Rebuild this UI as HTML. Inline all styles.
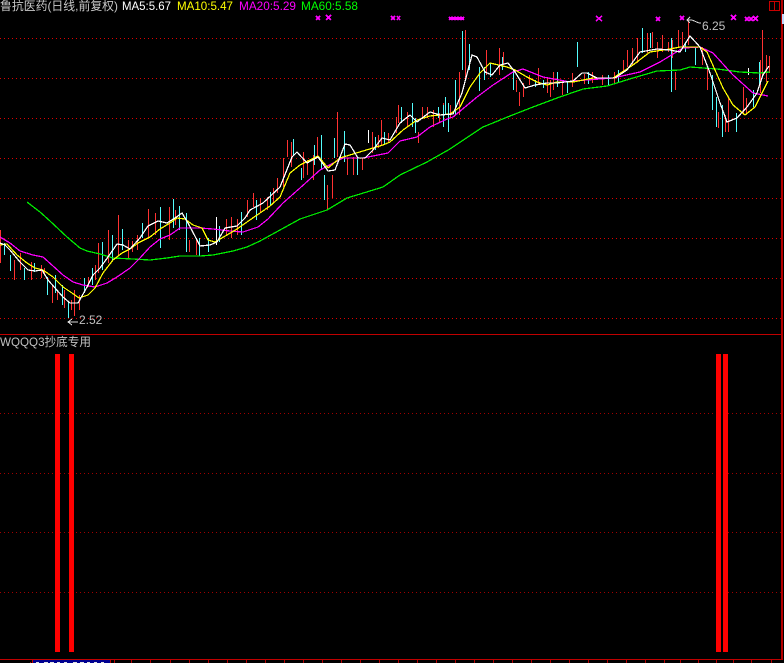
<!DOCTYPE html>
<html><head><meta charset="utf-8"><title>K</title>
<style>
html,body{margin:0;padding:0;background:#000;width:784px;height:663px;overflow:hidden}
svg{display:block}
text{font-family:"Liberation Sans","WenQuanYi Zen Hei","Noto Sans CJK SC",sans-serif;font-size:12px}
polyline{stroke-width:1.25}
</style></head><body>
<svg width="784" height="663" viewBox="0 0 784 663" xmlns="http://www.w3.org/2000/svg">
<rect width="784" height="663" fill="#000"/>
<g shape-rendering="crispEdges" fill="none">
<path d="M0 38.5H781M0 78.5H781M0 118.5H781M0 158.5H781M0 198.5H781M0 238.5H781M0 278.5H781M0 318.5H781" stroke="#e00000" stroke-dasharray="1 3"/>
<path d="M0 413.5H781M0 473.5H781M0 532.5H781M0 592.5H781" stroke="#a00000" stroke-dasharray="1 3"/>
<path d="M0 334.5H783M0 659.5H783" stroke="#c00000"/>
<path d="M782 0V660" stroke="#b40000" stroke-width="2"/>
<path d="M769.5 1.5H779.5V10.5H769.5ZM774.5 1.5V10.5" stroke="#c80000"/>
<rect x="782" y="14" width="2" height="10" fill="#c0d8ff"/>
<path d="M114.5 660V663M131.5 660V663M150.5 660V663M170.5 660V663M189.5 660V663M208.5 660V663M227.5 660V663M246.5 660V663M265.5 660V663M284.5 660V663M303.5 660V663M322.5 660V663M341.5 660V663M360.5 660V663M379.5 660V663M398.5 660V663M417.5 660V663M436.5 660V663M455.5 660V663M474.5 660V663M493.5 660V663M512.5 660V663M531.5 660V663M550.5 660V663M569.5 660V663M588.5 660V663M607.5 660V663M626.5 660V663M645.5 660V663M664.5 660V663M680.5 660V663M698.5 660V663M716.5 660V663M733.5 660V663M751.5 660V663M771.5 660V663" stroke="#b40000"/>
<rect x="33" y="660" width="77" height="3" fill="#000090"/>
<path d="M32.5 660V663M110.5 660V663M30.5 662V663" stroke="#c00000"/>
<path d="M36 662.5h3M44 662.5h4M50 662.5h4M57 662.5h3M64 662.5h3M73 662.5h4M80 662.5h4M87 662.5h3M94 662.5h3M101 662.5h3" stroke="#e0e0e0"/>
<rect x="55" y="354" width="5" height="298" fill="#ff0000"/>
<rect x="69" y="354" width="5" height="298" fill="#ff0000"/>
<rect x="716" y="354" width="5" height="298" fill="#ff0000"/>
<rect x="723" y="354" width="5" height="298" fill="#ff0000"/>

<path stroke="#ff3232" d="M0.5 230V263M14.5 260V280M20.5 253V270M31.5 262V280M41.5 265V278M44.5 268V275M52.5 285V303M57.5 290V300M64.5 290V308M71.5 300V310M74.5 290V316M79.5 295V310M88.5 277V287M95.5 265V280M98.5 243V273M108.5 230V263M118.5 215V255M128.5 240V258M132.5 241V252M137.5 235V250M148.5 209V238M155.5 213V235M169.5 207V240M175.5 210V225M189.5 240V252M196.5 240V255M226.5 219V235M231.5 217V238M237.5 219V235M247.5 200V217M253.5 193V207M260.5 198V212M267.5 197V210M273.5 188V203M277.5 178V193M283.5 158V187M287.5 140V157M291.5 142V167M303.5 152V178M307.5 160V175M313.5 155V180M317.5 137V157M327.5 185V210M332.5 175V198M337.5 112V157M347.5 158V175M353.5 157V175M362.5 158V170M372.5 132V153M378.5 135V148M381.5 120V145M388.5 133V142M396.5 117V133M398.5 105V123M407.5 112V127M418.5 132V143M422.5 107V118M427.5 107V118M433.5 110V127M439.5 113V123M443.5 103V117M450.5 105V118M459.5 72V115M465.5 30V78M486.5 50V75M499.5 48V75M503.5 52V65M516.5 80V92M519.5 92V106M523.5 83V97M529.5 75V85M538.5 68V85M547.5 77V93M550.5 80V97M553.5 72V90M562.5 83V95M572.5 73V87M584.5 74V84M592.5 72V83M602.5 75V85M614.5 72V84M623.5 60V73M627.5 50V67M632.5 48V65M637.5 38V63M647.5 33V53M652.5 32V48M657.5 42V58M662.5 35V52M668.5 42V52M672.5 40V58M675.5 72V90M678.5 30V47M682.5 32V48M688.5 20V45M702.5 47V65M707.5 67V90M718.5 112V128M725.5 115V132M728.5 98V132M743.5 87V113M746.5 98V113M760.5 60V93M762.5 30V77M766.5 55V82M769.5 56V73"/>
<path stroke="#54fcfc" d="M4.5 243V255M10.5 255V271M24.5 268V280M34.5 263V272M47.5 277V295M55.5 275V293M62.5 285V305M68.5 302V318M84.5 278V293M92.5 268V285M102.5 242V270M112.5 235V260M122.5 229V250M142.5 223V238M160.5 207V248M173.5 199V228M179.5 206V230M186.5 213V252M199.5 238V256M208.5 238V252M219.5 226V242M241.5 212V235M256.5 200V220M270.5 192V205M293.5 139V155M301.5 168V180M314.5 145V165M321.5 135V170M324.5 175V200M334.5 138V158M344.5 131V162M357.5 158V175M375.5 137V150M384.5 132V145M401.5 107V123M412.5 103V127M415.5 118V133M438.5 107V118M443.5 105V127M448.5 103V132M445.5 97V115M455.5 80V115M462.5 31V70M469.5 44V70M479.5 67V91M484.5 67V80M490.5 63V77M502.5 57V70M513.5 70V90M535.5 80V87M543.5 80V88M557.5 72V87M567.5 82V93M577.5 42V67M588.5 72V84M608.5 75V85M618.5 70V82M642.5 28V53M650.5 33V48M671.5 38V92M685.5 42V52M695.5 48V65M712.5 75V110M716.5 97V127M722.5 105V137M736.5 113V132M753.5 90V107M759.5 62V85"/>
<path stroke="#ffffff" d="M216.5 217V245M368.5 130V143M748.5 68V75"/>

<polyline stroke="#00f000" points="27,202 40,212 50,221 67,237 80,248 87,251 100,254 113,258 133,259 150,260 167,258 180,256 200,256 213,255 233,251 247,247 260,241 280,230 300,219 327,210 347,198 383,187 400,175 427,162 450,149 465,139 483,127 510,116 533,107 557,98 583,89 607,86 633,78 657,71 680,70 690,67 717,69 740,72 760,73 770,72"/>
<polyline stroke="#ff00ff" points="0,237 10,243 20,251 33,255 43,257 53,266 63,275 73,282 83,285 95,287 107,283 117,277 130,268 140,258 150,247 160,239 170,235 180,228 200,228 213,229 230,231 243,232 258,227 268,219 283,203 300,188 320,170 343,158 363,158 388,153 400,141 417,137 430,127 447,119 453,117 477,97 493,85 513,72 523,69 543,77 570,82 573,81 613,78 640,72 660,62 683,48 700,47 713,53 733,75 753,93 768,96"/>
<polyline stroke="#ffff00" points="0,245 7,244 17,255 27,263 35,268 43,270 53,277 63,287 72,293 79,298 88,295 95,288 103,273 113,260 122,253 130,249 138,243 150,237 160,229 170,223 177,218 185,219 193,225 202,228 208,240 215,242 227,235 237,229 247,222 260,213 270,206 280,197 290,173 300,165 318,156 328,168 340,158 363,151 383,145 390,142 403,130 417,120 430,116 450,114 460,107 470,87 480,73 490,63 507,67 515,70 527,77 537,82 547,85 557,82 570,82 573,82 593,78 613,78 633,65 650,52 670,49 680,47 700,47 707,52 723,88 733,105 745,115 755,107 768,81"/>
<polyline stroke="#ffffff" points="0,243 5,245 10,250 20,262 28,270 35,271 42,270 48,280 55,288 63,297 70,303 78,303 87,287 93,275 100,268 108,257 117,244 123,245 130,249 140,238 148,226 158,221 167,223 175,218 182,213 188,223 197,240 200,246 210,245 217,242 225,228 237,226 245,218 250,210 263,203 280,187 292,157 297,152 307,163 318,157 328,171 335,170 345,144 350,145 358,158 365,158 373,150 382,138 390,140 400,123 410,115 417,122 430,112 440,115 453,114 462,93 472,55 477,57 485,72 492,75 500,65 508,63 515,72 525,88 535,85 547,83 557,83 573,81 582,73 587,73 597,78 615,78 627,70 640,52 657,49 670,50 680,52 690,36 700,47 710,73 720,103 727,122 737,118 747,107 757,93 763,75 769,66"/>

<path stroke="#ff00ff" stroke-width="1.6" d="M316 16l4 4M320 16l-4 4M326 15l5 5M331 15l-5 5M391 16l4 4M395 16l-4 4M397 16l3 4M400 16l-3 4M449 17l3 3M452 17l-3 3M452 17l3 3M455 17l-3 3M455 17l3 3M458 17l-3 3M458 17l3 3M461 17l-3 3M461 17l3 3M464 17l-3 3M596 16l6 5M602 16l-6 5M656 17l4 4M660 17l-4 4M680 16l4 4M684 16l-4 4M731 15l5 5M736 15l-5 5M745 17l4 4M749 17l-4 4M749 17l4 4M753 17l-4 4M753 16l5 5M758 16l-5 5"/>
<path stroke="#d8d8d8" d="M690 17l-3 3 3 3M688 20l4 0 7 3h2M72 319l-4 3 4 3M68 322h10"/>
</g>
<text x="0" y="10" fill="#c8c8c8" textLength="118" lengthAdjust="spacingAndGlyphs">鲁抗医药(日线,前复权)</text>
<text x="122" y="10" fill="#ffffff" textLength="49" lengthAdjust="spacingAndGlyphs">MA5:5.67</text>
<text x="177" y="10" fill="#ffff00" textLength="56" lengthAdjust="spacingAndGlyphs">MA10:5.47</text>
<text x="239" y="10" fill="#ff00ff" textLength="57" lengthAdjust="spacingAndGlyphs">MA20:5.29</text>
<text x="301" y="10" fill="#00ff00" textLength="57" lengthAdjust="spacingAndGlyphs">MA60:5.58</text>
<text x="702" y="30" fill="#c0c0c0">6.25</text>
<text x="79" y="324" fill="#c0c0c0">2.52</text>
<text x="0" y="346" fill="#c0c0c0" textLength="91" lengthAdjust="spacingAndGlyphs">WQQQ3抄底专用</text>
</svg>
</body></html>
